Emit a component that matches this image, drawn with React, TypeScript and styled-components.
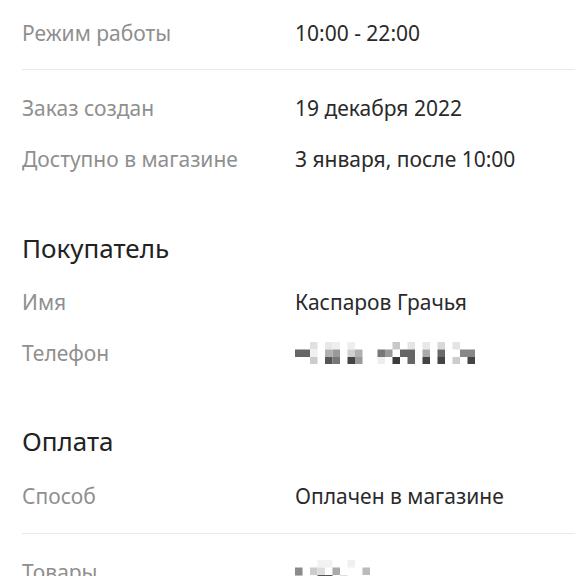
import styled, { createGlobalStyle } from "styled-components";

const GlobalStyle = createGlobalStyle`
  html, body {
    margin: 0;
    padding: 0;
    background: #ffffff;
  }
  body {
    font-family: "Noto Sans", Roboto, sans-serif;
    -webkit-font-smoothing: antialiased;
  }
`;

type Cell = [number, number, number, string];

// mosaic of a blurred phone number: [col, row, span, colour]
const phoneCells: Cell[] = [
    [2, 0, 1, "#e0e0e0"], [4, 0, 1, "#e8e8e8"], [5, 0, 1, "#eeeeee"], [7, 0, 1, "#eeeeee"],
    [13, 0, 1, "#c8c8c8"], [15, 0, 1, "#e4e4e4"], [17, 0, 1, "#e8e8e8"], [19, 0, 1, "#d8d8d8"],
    [21, 0, 1, "#e4e4e4"],
    [0, 1, 2, "#666666"], [2, 1, 1, "#f0f0f0"], [4, 1, 1, "#b0b0b0"], [5, 1, 1, "#999999"],
    [7, 1, 1, "#d0d0d0"], [8, 1, 1, "#b0b0b0"], [11, 1, 1, "#777777"], [12, 1, 1, "#999999"],
    [14, 1, 2, "#666666"], [17, 1, 1, "#aaaaaa"], [19, 1, 1, "#6a6a6a"], [22, 1, 2, "#888888"],
    [2, 2, 1, "#cccccc"], [4, 2, 1, "#555555"], [5, 2, 1, "#777777"], [7, 2, 1, "#444444"],
    [8, 2, 1, "#999999"], [11, 2, 1, "#eeeeee"], [13, 2, 1, "#3c3c3c"], [15, 2, 1, "#666666"],
    [17, 2, 1, "#444444"], [19, 2, 1, "#444444"], [21, 2, 1, "#cccccc"], [23, 2, 1, "#444444"],
];

const goodsCells: Cell[] = [
    [3, 0, 2, "#f2f2f2"], [7, 0, 1, "#f0f0f0"],
    [0, 1, 1, "#8a8a8a"], [2, 1, 1, "#cccccc"], [3, 1, 1, "#dddddd"], [5, 1, 1, "#aaaaaa"],
    [9, 1, 1, "#bbbbbb"],
    [0, 2, 1, "#bbbbbb"], [3, 2, 2, "#555555"], [6, 2, 1, "#dddddd"],
];

const CELL = 7.5;

const Mosaic = ({ cells, cols, rows }: { cells: Cell[]; cols: number; rows: number }) => (
    <svg width={cols * CELL} height={rows * CELL} viewBox={`0 0 ${cols * CELL} ${rows * CELL}`}>
        {cells.map(([c, r, span, fill], i) => (
            <rect key={i} x={c * CELL} y={r * CELL} width={span * CELL} height={CELL} fill={fill} />
        ))}
    </svg>
);

const Page = styled.div`
  padding-left: 22px;
  overflow: hidden;
  height: 576px;
`;

const Group = styled.div<{ $top: number; $bottom?: number; $divider?: boolean }>`
  padding-top: ${(p) => p.$top}px;
  padding-bottom: ${(p) => p.$bottom ?? 0}px;
  border-bottom: ${(p) => (p.$divider ? "1px solid #e9e9e9" : "none")};
`;

const Row = styled.div`
  display: flex;
  align-items: center;
  height: 51px;
`;

const Label = styled.div`
  width: 273px;
  flex-shrink: 0;
  font-size: 21px;
  line-height: 28px;
  color: #8f8f8f;
`;

const Value = styled.div`
  font-size: 21px;
  line-height: 28px;
  color: #2a2a2a;
  display: flex;
  align-items: center;
`;

const Heading = styled.h2<{ $top: number; $bottom: number }>`
  margin: ${(p) => p.$top}px 0 ${(p) => p.$bottom}px;
  height: 32px;
  line-height: 32px;
  font-size: 26px;
  font-weight: 400;
  color: #222222;
`;

export default function App() {
    return (
        <>
            <GlobalStyle />
            <Page>
                <Group $top={7.5} $bottom={10} $divider>
                    <Row>
                        <Label>Режим работы</Label>
                        <Value>10:00 - 22:00</Value>
                    </Row>
                </Group>
                <Group $top={13}>
                    <Row>
                        <Label>Заказ создан</Label>
                        <Value>19 декабря 2022</Value>
                    </Row>
                    <Row>
                        <Label>Доступно в магазине</Label>
                        <Value>3 января, после 10:00</Value>
                    </Row>
                </Group>
                <Heading $top={47.5} $bottom={12.5}>Покупатель</Heading>
                <Row>
                    <Label>Имя</Label>
                    <Value>Каспаров Грачья</Value>
                </Row>
                <Row>
                    <Label>Телефон</Label>
                    <Value>
                        <Mosaic cells={phoneCells} cols={24} rows={3} />
                    </Value>
                </Row>
                <Heading $top={46.5} $bottom={13.5}>Оплата</Heading>
                <Group $top={0} $bottom={11} $divider>
                    <Row>
                        <Label>Способ</Label>
                        <Value>Оплачен в магазине</Value>
                    </Row>
                </Group>
                <Group $top={12.5}>
                    <Row>
                        <Label>Товары</Label>
                        <Value>
                            <Mosaic cells={goodsCells} cols={10} rows={3} />
                        </Value>
                    </Row>
                </Group>
            </Page>
        </>
    );
}
